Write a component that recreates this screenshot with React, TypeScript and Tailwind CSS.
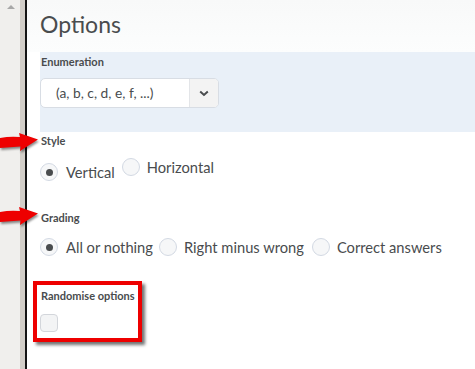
import React from "react";

const font = { fontFamily: "Lato, 'Noto Sans', sans-serif" };

function Radio({ checked }: { checked?: boolean }) {
  return (
    <span className="flex h-[18px] w-[18px] shrink-0 items-center justify-center rounded-full border border-[#d3d9e3] bg-[#f6f7f8]">
      {checked && <span className="h-[7px] w-[7px] rounded-full bg-[#494c4e]" />}
    </span>
  );
}

function RedArrow({ top }: { top: string }) {
  return (
    <svg
      className={`absolute left-0 ${top} drop-shadow-[1px_2px_1px_rgba(0,0,0,0.45)]`}
      width="40"
      height="21"
      viewBox="0 0 40 21"
    >
      <path d="M0 5 Q10 3 20 4 L19 0 L38 6.5 L20 18 L20.5 13.5 Q10 14 0 15 Z" fill="#ee0000" />
    </svg>
  );
}

export default function App() {
  return (
    <div className="relative flex h-[369px] w-[475px] overflow-hidden bg-white text-[#494c4e]" style={font}>
      {/* scrollbar / frame */}
      <div className="relative w-[20px] bg-[#f0efed]">
        <span className="absolute left-[7px] top-[5px] h-0 w-0 border-x-[4px] border-b-[4px] border-x-transparent border-b-[#a8a8a8]" />
      </div>
      <div className="w-[5px] bg-[#d2cec8]" />
      <div className="w-[2px] bg-[#141414]" />

      <div className="flex flex-1 flex-col">
        <div className="h-[52px] bg-gradient-to-b from-[#f8f9f9] to-[#fcfdfd] pl-[13px] pt-[10px]">
          <h1 className="text-[23px] leading-[29px] font-normal">Options</h1>
        </div>

        <div className="pl-[13px]">
          <div className="h-[80px] bg-[#e9f0f8] pt-[3px]">
            <div className="text-[11px] leading-[13px] font-bold pl-px">Enumeration</div>
            <div className="mt-[10px] flex h-[30px] w-[179px] overflow-hidden rounded-[5px] border border-[#d8dde4] bg-white">
              <div className="flex flex-1 items-center pl-[15px] text-[13.8px] leading-[18px]">(a, b, c, d, e, f, ...)</div>
              <div className="flex w-[29px] items-center justify-center border-l border-[#e3e5e8] bg-[#f3f3f3]">
                <svg width="10" height="7" viewBox="0 0 10 7">
                  <path d="M1.2 1.5 L5 5 L8.8 1.5" fill="none" stroke="#494c4e" strokeWidth="2" />
                </svg>
              </div>
            </div>
          </div>

          <div className="mt-[2px] pl-px text-[11px] leading-[13px] font-bold">Style</div>
          <div className="mt-[11px] flex items-start text-[14.7px] leading-[18px]">
            <div className="mt-[5px] flex items-center">
              <Radio checked />
              <span className="ml-[8px]">Vertical</span>
            </div>
            <div className="ml-[7px] flex items-center">
              <Radio />
              <span className="ml-[7px]">Horizontal</span>
            </div>
          </div>

          <div className="mt-[30px] pl-px text-[11px] leading-[13px] font-bold">Grading</div>
          <div className="mt-[14px] flex items-center text-[14.7px] leading-[18px]">
            <Radio checked />
            <span className="ml-[8px]">All or nothing</span>
            <span className="ml-[6px]"><Radio /></span>
            <span className="ml-[7px]">Right minus wrong</span>
            <span className="ml-[8px]"><Radio /></span>
            <span className="ml-[7px]">Correct answers</span>
          </div>

          <div className="-ml-[7px] mt-[25px] w-[109px] border-4 border-[#ee0000] pb-[6px] pl-[3px] pt-[4px] shadow-[3px_3px_3px_rgba(0,0,0,0.55)]">
            <div className="pl-px text-[11px] leading-[13px] font-bold">Randomise options</div>
            <div className="mt-[12px] h-[18px] w-[18px] rounded-[4px] border border-[#d3d6db] bg-[#f3f4f5]" />
          </div>
        </div>
      </div>

      <RedArrow top="top-[133px]" />
      <RedArrow top="top-[207px]" />
    </div>
  );
}
